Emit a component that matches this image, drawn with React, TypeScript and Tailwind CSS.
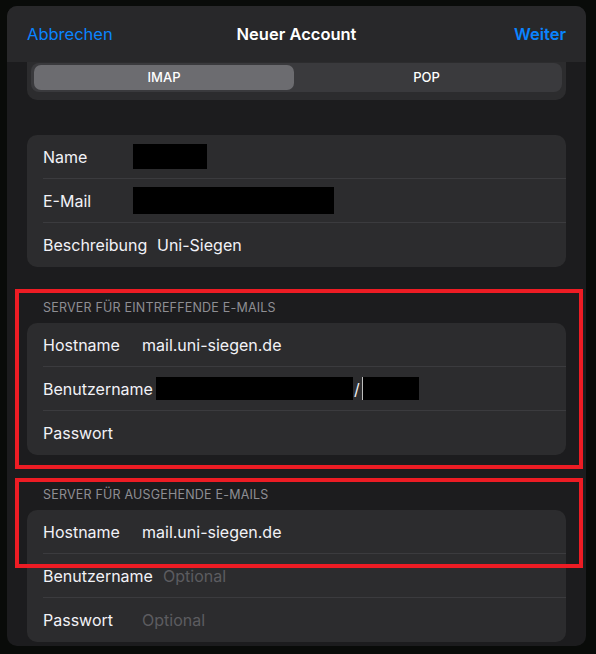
import React from 'react';

type Row = {
  label: string;
  labelW: string;
  value?: string;
  placeholder?: boolean;
  redact?: string;
  redactTail?: boolean;
};

const account: Row[] = [
  { label: 'Name', labelW: 'w-[90px]', redact: 'w-[74px] h-[25px]' },
  { label: 'E-Mail', labelW: 'w-[90px]', redact: 'w-[201px] h-[27px]' },
  { label: 'Beschreibung', labelW: 'w-[114px]', value: 'Uni-Siegen' },
];

const incoming: Row[] = [
  { label: 'Hostname', labelW: 'w-[99px]', value: 'mail.uni-siegen.de' },
  { label: 'Benutzername', labelW: 'w-[113px]', redact: 'w-[197px] h-[23px]', redactTail: true },
  { label: 'Passwort', labelW: 'w-[99px]' },
];

const outgoing: Row[] = [
  { label: 'Hostname', labelW: 'w-[99px]', value: 'mail.uni-siegen.de' },
  { label: 'Benutzername', labelW: 'w-[120px]', value: 'Optional', placeholder: true },
  { label: 'Passwort', labelW: 'w-[99px]', value: 'Optional', placeholder: true },
];

function Card({ rows }: { rows: Row[] }) {
  return (
    <div className="mx-[20px] rounded-[10px] bg-[#2c2c2e] pl-[16px]">
      {rows.map((row, i) => (
        <div
          key={row.label}
          className={
            i < rows.length - 1
              ? 'flex h-[44px] items-center border-b border-[#3b3b3e] text-[16px] text-[#f2f2f7]'
              : 'flex h-[44px] items-center text-[16px] text-[#f2f2f7]'
          }
        >
          <span className={`${row.labelW} shrink-0 whitespace-nowrap`}>{row.label}</span>
          {row.redact && (
            <span className="flex items-center">
              <span className={`${row.redact} bg-black`} />
              {row.redactTail && (
                <>
                  <span className="pl-[1px]">/</span>
                  <span className="ml-[2px] h-[23px] w-[57px] border-l border-[#bdbdbd] bg-black" />
                </>
              )}
            </span>
          )}
          {row.value && (
            <span className={row.placeholder ? 'text-[#5c5c60]' : ''}>{row.value}</span>
          )}
        </div>
      ))}
    </div>
  );
}

function SectionTitle({ children, mt }: { children: string; mt: string }) {
  return (
    <div className={`${mt} mb-[7px] pl-[36px] text-[12.5px] leading-[16px] tracking-[0.2px] text-[#8e8e93]`}>
      {children}
    </div>
  );
}

export default function App() {
  return (
    <div
      className="relative h-[654px] w-[596px] overflow-hidden bg-[#090b09] pt-[6px] pl-[7px]"
      style={{ fontFamily: 'Inter, "Liberation Sans", sans-serif' }}
    >
      <div className="flex h-[640px] w-[579px] flex-col overflow-hidden rounded-[10px] bg-[#1c1c1e]">
        <div className="grid h-[56px] shrink-0 grid-cols-[1fr_auto_1fr] items-center bg-[#28282a] px-[20px] text-[16.5px]">
          <button className="justify-self-start text-[#0a84ff]">Abbrechen</button>
          <h1 className="font-semibold text-white">Neuer Account</h1>
          <button className="justify-self-end font-semibold text-[#0a84ff]">Weiter</button>
        </div>

        <div className="mx-[20px] rounded-b-[10px] bg-[#2c2c2e] px-[4px] pt-[1px] pb-[8px]">
          <div className="flex h-[29px] rounded-[8px] bg-[#3a3a3d] px-[3px] py-[2px] text-[13px] font-medium text-white">
            <div className="flex w-[260px] items-center justify-center rounded-[7px] bg-[#6c6c70]">IMAP</div>
            <div className="flex flex-1 items-center justify-center">POP</div>
          </div>
        </div>

        <div className="mt-[35px]">
          <Card rows={account} />
        </div>

        <SectionTitle mt="mt-[33px]">SERVER FÜR EINTREFFENDE E-MAILS</SectionTitle>
        <Card rows={incoming} />

        <SectionTitle mt="mt-[32px]">SERVER FÜR AUSGEHENDE E-MAILS</SectionTitle>
        <Card rows={outgoing} />
      </div>

      {/* red annotation frames */}
      <div className="absolute left-[15px] top-[289px] h-[180px] w-[568px] border-4 border-[#ed1c24]" />
      <div className="absolute left-[15px] top-[478px] h-[90px] w-[568px] border-4 border-[#ed1c24]" />
    </div>
  );
}
